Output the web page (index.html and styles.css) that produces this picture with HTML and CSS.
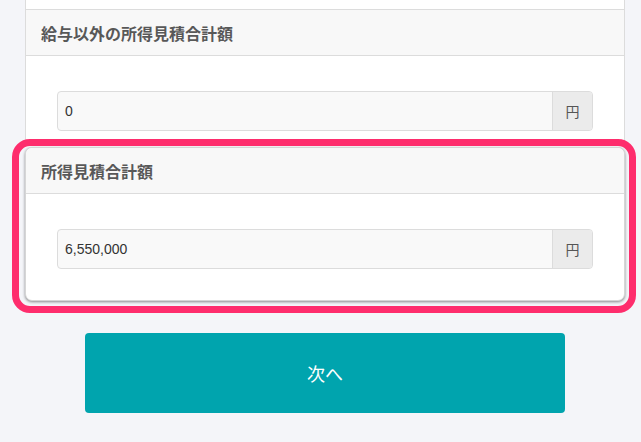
FILE: index.html
```html
<!DOCTYPE html>
<html lang="ja">
<head>
<meta charset="utf-8">
<title>所得見積</title>
<link rel="stylesheet" href="styles.css">
</head>
<body>
<main class="page">
  <section class="card card-first">
    <div class="card-top"></div>
    <div class="card-header">給与以外の所得見積合計額</div>
    <div class="card-body body-first">
      <div class="input-group">
        <div class="input-value">0</div>
        <div class="input-addon">円</div>
      </div>
    </div>
  </section>
  <section class="card card-highlight">
    <div class="card-header">所得見積合計額</div>
    <div class="card-body body-last">
      <div class="input-group">
        <div class="input-value">6,550,000</div>
        <div class="input-addon">円</div>
      </div>
    </div>
    <div class="highlight-ring"></div>
  </section>
  <div class="actions">
    <button class="next-btn" type="button">次へ</button>
  </div>
</main>
</body>
</html>
```

FILE: styles.css
```css
html, body {
  margin: 0;
  padding: 0;
  background: #f4f5f9;
  font-family: "Liberation Sans", "Noto Sans CJK JP", sans-serif;
}
.page {
  width: 600px;
  margin-left: 25px;
  display: flex;
  flex-direction: column;
}
.card {
  background: #fff;
  border-left: 1px solid #dcdcdc;
  border-right: 1px solid #dcdcdc;
  box-sizing: border-box;
}
.card-top {
  height: 9px;
}
.card-header {
  height: 45px;
  box-sizing: content-box;
  border-top: 1px solid #dcdcdc;
  border-bottom: 1px solid #dcdcdc;
  background: #f8f8f8;
  display: flex;
  align-items: center;
  padding-left: 15px;
  font-family: "Noto Sans CJK JP", sans-serif;
  font-weight: 700;
  font-size: 16px;
  color: #585858;
}
.card-body {
  padding: 35px 31px 0 31px;
}
.body-first {
  padding-bottom: 16px;
}
.body-last {
  padding-bottom: 31px;
}
.input-group {
  display: flex;
  height: 40px;
  box-sizing: border-box;
  border: 1px solid #dcdcdc;
  border-radius: 4px;
  background: #f9f9f9;
  overflow: hidden;
}
.input-value {
  flex: 1;
  display: flex;
  align-items: center;
  padding-left: 7px;
  font-size: 14px;
  color: #333;
}
.input-addon {
  width: 39px;
  border-left: 1px solid #dcdcdc;
  background: #ebebeb;
  display: flex;
  align-items: center;
  justify-content: center;
  font-family: "Noto Sans CJK JP", sans-serif;
  font-size: 14px;
  color: #555;
}
.card-highlight {
  position: relative;
  border: 1px solid #d6d6d6;
  border-radius: 7px;
  box-shadow: 0 1px 3px rgba(0, 0, 0, 0.45);
}
.card-highlight .card-header {
  border-top: none;
  border-radius: 7px 7px 0 0;
}
.highlight-ring {
  position: absolute;
  left: -14px;
  top: -9px;
  right: -12px;
  bottom: -13px;
  border: 7px solid #fe2d6d;
  border-radius: 18px;
  pointer-events: none;
}
.actions {
  display: flex;
  justify-content: center;
  padding-top: 32px;
}
.next-btn {
  width: 480px;
  height: 80px;
  border: none;
  border-radius: 4px;
  background: #00a4ae;
  color: #fff;
  font-family: "Noto Sans CJK JP", sans-serif;
  font-size: 18px;
}
```
